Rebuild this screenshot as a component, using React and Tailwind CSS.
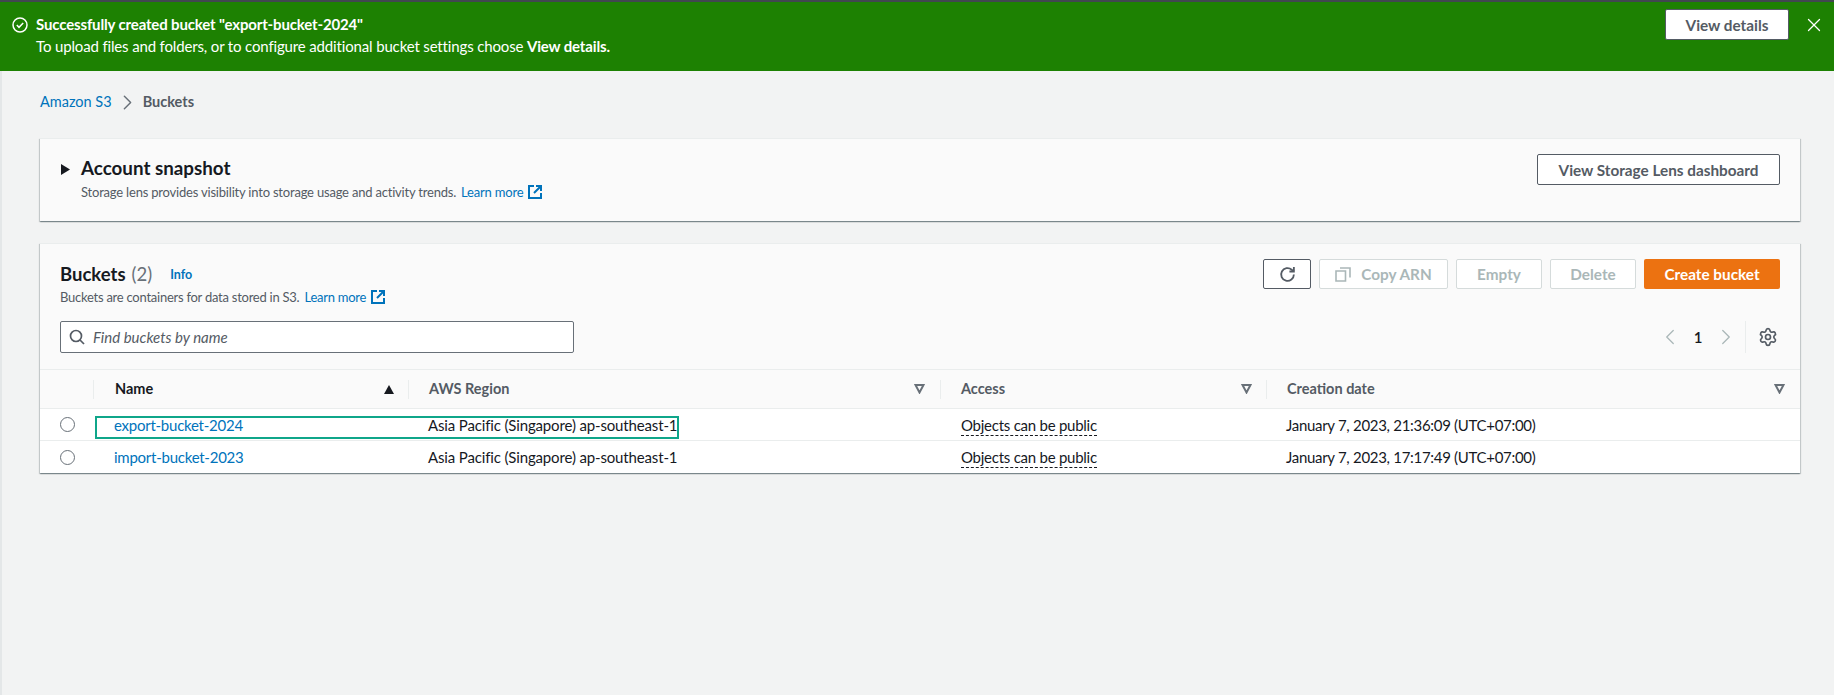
import React from "react";
import { ChevronLeft, ChevronRight, Settings, X } from "lucide-react";

const ExternalIcon = () => (
  <svg width="14" height="14" viewBox="0 0 14 14" fill="none" stroke="#0073bb" strokeWidth="2" className="shrink-0">
    <path d="M6 1H1v12h12V8" />
    <path d="M8 1h5v5M13 1 6 8" />
  </svg>
);

const FilterIcon = () => (
  <svg width="11" height="10" viewBox="0 0 11 10" fill="none" stroke="#687078" strokeWidth="2" className="shrink-0">
    <path d="M1.5 1h8L5.5 8.5z" />
  </svg>
);

const Radio = () => <div className="w-[15px] h-[15px] rounded-full border border-[#687078] bg-white" />;

const HeaderCell = ({ label, className = "", dark, children }) => (
  <div className={`flex items-center h-[19px] pl-[20px] text-[14.5px] font-bold ${dark ? "text-[#16191f]" : "text-[#545b64]"} ${className}`}>
    <span className="flex-1">{label}</span>
    {children}
  </div>
);

const Row = ({ name, date, last, outlined }) => (
  <div className={`relative grid grid-cols-[53px_315px_532px_326px_534px] items-center bg-white text-[15px] tracking-[-0.25px] text-[#16191f] ${last ? "h-[32px]" : "h-[32px] border-b border-[#eaeded]"}`}>
    <div className="pl-[20px]">
      <Radio />
    </div>
    <a className="pl-[21px] text-[#0073bb]">{name}</a>
    <div className="pl-[20px] tracking-[-0.15px]">Asia Pacific (Singapore) ap-southeast-1</div>
    <div className="pl-[21px]">
      <span className="border-b border-dashed border-[#16191f] leading-[20px] inline-block">Objects can be public</span>
    </div>
    <div className="pl-[20px] tracking-[-0.3px]">{date}</div>
    {outlined && <div className="absolute left-[55px] top-[7px] w-[584px] h-[23px] border-2 border-[#0fa68a]" />}
  </div>
);

const ToolButton = ({ children, className = "" }) => (
  <button className={`h-[30px] flex items-center justify-center gap-[10px] border border-[#d5dbdb] rounded-[2px] bg-white text-[#aab7b8] font-bold ${className}`}>
    {children}
  </button>
);

export default function App() {
  return (
    <div className="min-h-screen overflow-hidden bg-[#f2f3f3] text-[15.3px] leading-[22px] font-['Lato',sans-serif]">
      {/* Flash banner */}
      <div className="h-[71px] border-t-2 border-[#414750] bg-[#1d8102] flex items-start text-white pl-[12px] pr-[9px]">
        <svg width="16" height="16" viewBox="0 0 16 16" fill="none" stroke="#fff" strokeWidth="1.5" className="mt-[15px] shrink-0">
          <circle cx="8" cy="8" r="7" />
          <path d="m4.8 8 2.2 2.3 4.2-4.4" />
        </svg>
        <div className="ml-[8px] pt-[11px] flex-1 text-[15px] tracking-[-0.15px]">
          <div className="font-bold">Successfully created bucket "export-bucket-2024"</div>
          <div>
            To upload files and folders, or to configure additional bucket settings choose <b>View details.</b>
          </div>
        </div>
        <button className="mt-[7px] w-[124px] h-[31px] bg-white border border-[#545b64] rounded-[2px] text-[#545b64] font-bold">
          View details
        </button>
        <X size={22} strokeWidth={1.4} className="ml-[14px] mt-[12px]" />
      </div>

      <div className="min-h-[624px] border-l-2 border-[#e4e7e8] pl-[38px] pr-[34px]">
        {/* Breadcrumb */}
        <div className="pt-[20px] flex items-center h-[42px] text-[14.5px] text-[#545b64]">
          <a className="text-[#0073bb]">Amazon S3</a>
          <ChevronRight size={25} strokeWidth={1.4} className="mx-[3px] text-[#687078]" />
          <span className="font-bold">Buckets</span>
        </div>

        {/* Account snapshot */}
        <div className="mt-[25px] h-[83px] bg-[#fafafa] border-t border-[#eaeded] shadow-[0_1px_1px_0_rgba(0,28,36,0.3),1px_1px_1px_0_rgba(0,28,36,0.15),-1px_1px_1px_0_rgba(0,28,36,0.15)] flex items-start justify-between pt-[15px] pl-[21px] pr-[20px]">
          <div className="flex items-start">
            <svg width="9" height="11" viewBox="0 0 9 11" className="mt-[10px] fill-[#16191f]">
              <path d="M0 0 9 5.5 0 11z" />
            </svg>
            <div className="ml-[11px]">
              <div className="mt-[1px] text-[18.8px] leading-[26px] font-bold text-[#16191f]">Account snapshot</div>
              <div className="flex items-center text-[13px] tracking-[-0.2px] leading-[20px] text-[#545b64] mt-[1px]">
                Storage lens provides visibility into storage usage and activity trends.
                <a className="ml-[5px] mr-[5px] text-[#0073bb]">Learn more</a>
                <ExternalIcon />
              </div>
            </div>
          </div>
          <button className="w-[243px] h-[31px] bg-white border border-[#545b64] rounded-[2px] text-[#545b64] font-bold">
            View Storage Lens dashboard
          </button>
        </div>

        {/* Buckets table */}
        <div className="mt-[22px] h-[230px] bg-[#fafafa] border-t border-[#eaeded] shadow-[0_1px_1px_0_rgba(0,28,36,0.3),1px_1px_1px_0_rgba(0,28,36,0.15),-1px_1px_1px_0_rgba(0,28,36,0.15)]">
          <div className="pl-[20px] pr-[20px] pt-[15px] h-[125px]">
            <div className="flex items-start justify-between h-[62px]">
              <div>
                <div className="flex items-center h-[29px] text-[18.5px] leading-[30px] font-bold text-[#16191f]">
                  Buckets
                  <span className="ml-[6px] font-normal text-[#687078]">(2)</span>
                  <a className="ml-[18px] mt-[3px] text-[12.5px] leading-[18px] text-[#0073bb]">Info</a>
                </div>
                <div className="flex items-center text-[13px] tracking-[-0.25px] leading-[18px] text-[#545b64]">
                  Buckets are containers for data stored in S3.
                  <a className="ml-[5px] mr-[5px] text-[#0073bb]">Learn more</a>
                  <ExternalIcon />
                </div>
              </div>
              <div className="flex items-center gap-[8px]">
                <button className="w-[48px] h-[30px] flex items-center justify-center bg-white border border-[#545b64] rounded-[2px]">
                  <svg width="17" height="17" viewBox="0 0 16 16" fill="none" stroke="#545b64" strokeWidth="1.7">
                    <path d="M14 8a6 6 0 1 1-2-4.5L14 5" />
                    <path d="M14 1v4.2H9.8" />
                  </svg>
                </button>
                <ToolButton className="w-[129px]">
                  <svg width="16" height="16" viewBox="0 0 16 16" fill="none" stroke="#aab7b8" strokeWidth="1.6">
                    <path d="M1 5h9.5v10H1z" />
                    <path d="M5 2h10v9.5" />
                  </svg>
                  Copy ARN
                </ToolButton>
                <ToolButton className="w-[86px]">Empty</ToolButton>
                <ToolButton className="w-[86px]">Delete</ToolButton>
                <button className="w-[136px] h-[30px] bg-[#ec7211] rounded-[2px] text-white font-bold">Create bucket</button>
              </div>
            </div>
            <div className="flex items-center justify-between h-[32px]">
              <div className="w-[514px] h-[32px] flex items-center bg-white border border-[#687078] rounded-[2px] pl-[8px] text-[15px] text-[#545b64]">
                <svg width="16" height="16" viewBox="0 0 16 16" fill="none" stroke="#545b64" strokeWidth="1.7">
                  <circle cx="7" cy="7" r="5.5" />
                  <path d="m11 11 4 4" />
                </svg>
                <span className="ml-[8px] italic">Find buckets by name</span>
              </div>
              <div className="flex items-center text-[#16191f] pr-[2px]">
                <ChevronLeft size={26} strokeWidth={1.2} className="text-[#aab7b8]" />
                <span className="w-[30px] text-center font-semibold text-[15px]">1</span>
                <ChevronRight size={26} strokeWidth={1.2} className="text-[#aab7b8]" />
                <div className="ml-[6px] h-[32px] border-l border-[#eaeded] pl-[12px] flex items-center">
                  <Settings size={20} strokeWidth={2} className="text-[#545b64]" />
                </div>
              </div>
            </div>
          </div>

          <div className="grid grid-cols-[53px_315px_532px_326px_534px] items-center h-[40px] border-t border-b border-[#eaeded]">
            <div />
            <HeaderCell label="Name" dark className="border-l border-[#eaeded] pl-[21px] pr-[14px]">
              <svg width="10" height="9" viewBox="0 0 10 9" className="fill-[#16191f]">
                <path d="M5 0 10 9H0z" />
              </svg>
            </HeaderCell>
            <HeaderCell label="AWS Region" className="border-l border-[#eaeded] pr-[15px]">
              <FilterIcon />
            </HeaderCell>
            <HeaderCell label="Access" className="border-l border-[#eaeded] pr-[14px]">
              <FilterIcon />
            </HeaderCell>
            <HeaderCell label="Creation date" className="border-l border-[#eaeded] pr-[15px]">
              <FilterIcon />
            </HeaderCell>
          </div>
          <Row name="export-bucket-2024" date="January 7, 2023, 21:36:09 (UTC+07:00)" outlined />
          <Row name="import-bucket-2023" date="January 7, 2023, 17:17:49 (UTC+07:00)" last />
        </div>
      </div>
    </div>
  );
}
